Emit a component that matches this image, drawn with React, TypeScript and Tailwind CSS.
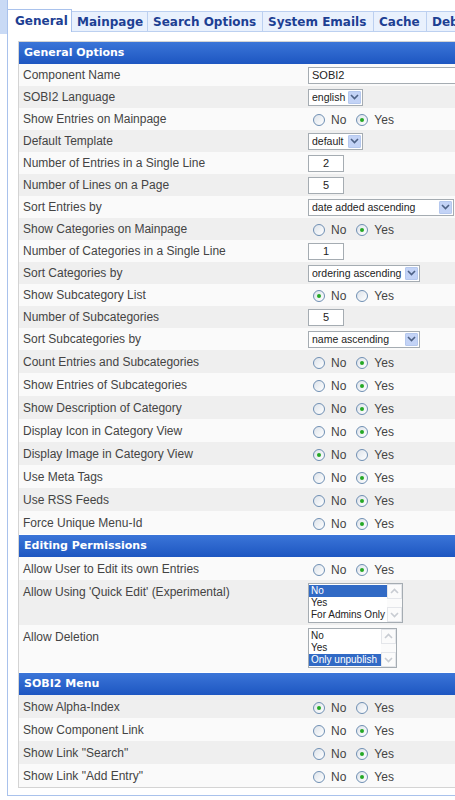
import React from 'react';

type Ctl =
  | { type: 'text'; value: string }
  | { type: 'select'; value: string; width: number }
  | { type: 'num'; value: string }
  | { type: 'radio'; yes: boolean }
  | { type: 'list'; items: string[]; selected: number; width: number };

interface Row {
  label: string;
  ctl: Ctl;
}

const general: Row[] = [
  { label: 'Component Name', ctl: { type: 'text', value: 'SOBI2' } },
  { label: 'SOBI2 Language', ctl: { type: 'select', value: 'english', width: 55 } },
  { label: 'Show Entries on Mainpage', ctl: { type: 'radio', yes: true } },
  { label: 'Default Template', ctl: { type: 'select', value: 'default', width: 55 } },
  { label: 'Number of Entries in a Single Line', ctl: { type: 'num', value: '2' } },
  { label: 'Number of Lines on a Page', ctl: { type: 'num', value: '5' } },
  { label: 'Sort Entries by', ctl: { type: 'select', value: 'date added ascending', width: 146 } },
  { label: 'Show Categories on Mainpage', ctl: { type: 'radio', yes: true } },
  { label: 'Number of Categories in a Single Line', ctl: { type: 'num', value: '1' } },
  { label: 'Sort Categories by', ctl: { type: 'select', value: 'ordering ascending', width: 112 } },
  { label: 'Show Subcategory List', ctl: { type: 'radio', yes: false } },
  { label: 'Number of Subcategories', ctl: { type: 'num', value: '5' } },
  { label: 'Sort Subcategories by', ctl: { type: 'select', value: 'name ascending', width: 112 } },
  { label: 'Count Entries and Subcategories', ctl: { type: 'radio', yes: true } },
  { label: 'Show Entries of Subcategories', ctl: { type: 'radio', yes: true } },
  { label: 'Show Description of Category', ctl: { type: 'radio', yes: true } },
  { label: 'Display Icon in Category View', ctl: { type: 'radio', yes: true } },
  { label: 'Display Image in Category View', ctl: { type: 'radio', yes: false } },
  { label: 'Use Meta Tags', ctl: { type: 'radio', yes: true } },
  { label: 'Use RSS Feeds', ctl: { type: 'radio', yes: true } },
  { label: 'Force Unique Menu-Id', ctl: { type: 'radio', yes: true } },
];

const editing: Row[] = [
  { label: 'Allow User to Edit its own Entries', ctl: { type: 'radio', yes: true } },
  {
    label: "Allow Using 'Quick Edit' (Experimental)",
    ctl: { type: 'list', items: ['No', 'Yes', 'For Admins Only'], selected: 0, width: 95 },
  },
  {
    label: 'Allow Deletion',
    ctl: { type: 'list', items: ['No', 'Yes', 'Only unpublish'], selected: 2, width: 89 },
  },
];

const menu: Row[] = [
  { label: 'Show Alpha-Index', ctl: { type: 'radio', yes: false } },
  { label: 'Show Component Link', ctl: { type: 'radio', yes: true } },
  { label: 'Show Link "Search"', ctl: { type: 'radio', yes: true } },
  { label: 'Show Link "Add Entry"', ctl: { type: 'radio', yes: true } },
];

// tab name and its width in the strip
const tabs: [string, number][] = [
  ['General', 64],
  ['Mainpage', 76],
  ['Search Options', 115],
  ['System Emails', 111],
  ['Cache', 53],
  ['Debug', 60],
];

function Radio({ on }: { on: boolean }) {
  return (
    <span className="relative block w-[12px] h-[12px] rounded-full border border-[#6f8fb3] bg-gradient-to-br from-[#dde3ea] to-white">
      {on && <span className="absolute left-[3px] top-[3px] w-[4px] h-[4px] rounded-full bg-[#25a825]" />}
    </span>
  );
}

function Arrow({ faded }: { faded?: boolean }) {
  return (
    <svg width="9" height="6" viewBox="0 0 9 6">
      <path d="M1 1 L4.5 4.5 L8 1" fill="none" stroke={faded ? '#c8ccd2' : '#4d6185'} strokeWidth="1.6" />
    </svg>
  );
}

function Control({ ctl }: { ctl: Ctl }) {
  if (ctl.type === 'text') {
    return (
      <div className="w-[170px] h-[17px] border border-[#a5acb2] bg-white pl-[3px] text-[11px] leading-[15px] text-[#222]">
        {ctl.value}
      </div>
    );
  }
  if (ctl.type === 'num') {
    return (
      <div className="w-[36px] h-[17px] border border-[#a5acb2] bg-white text-center text-[11px] leading-[15px] text-[#222]">
        {ctl.value}
      </div>
    );
  }
  if (ctl.type === 'select') {
    return (
      <div
        className="flex items-center h-[17px] border border-[#a5acb2] bg-white pl-[3px] pr-[1px] text-[10.5px] text-[#222]"
        style={{ width: ctl.width }}
      >
        <span className="flex-1 leading-[15px] whitespace-nowrap overflow-hidden">{ctl.value}</span>
        <span className="flex items-center justify-center w-[13px] h-[13px] bg-[#c3d3f6] border border-[#b5c8ee] rounded-[1px]">
          <Arrow />
        </span>
      </div>
    );
  }
  if (ctl.type === 'radio') {
    return (
      <div className="flex items-center pt-[2px] text-[12px] text-[#444]">
        <span className="ml-[5px]"><Radio on={!ctl.yes} /></span>
        <span className="ml-[6px]">No</span>
        <span className="ml-[10px]"><Radio on={ctl.yes} /></span>
        <span className="ml-[6px]">Yes</span>
      </div>
    );
  }
  return (
    <div className="flex h-[40px] border border-[#a5acb2] bg-white" style={{ width: ctl.width }}>
      <div className="flex-1 flex flex-col pt-[1px] text-[10px] leading-[12px] text-[#222]">
        {ctl.items.map((it, i) => (
          <div
            key={it}
            className={
              i === ctl.selected
                ? 'pl-[2px] bg-[#316ac5] text-white whitespace-nowrap'
                : 'pl-[2px] whitespace-nowrap'
            }
          >
            {it}
          </div>
        ))}
      </div>
      <div className="w-[15px] flex flex-col justify-between bg-[#fbfbfb]">
        <span className="flex items-center justify-center h-[15px] border border-[#e4e6ea] rotate-180">
          <Arrow faded />
        </span>
        <span className="flex items-center justify-center h-[15px] border border-[#e4e6ea]">
          <Arrow faded />
        </span>
      </div>
    </div>
  );
}

function Section({ title, rows, heights, grayFirst }: { title: string; rows: Row[]; heights: number[]; grayFirst?: boolean }) {
  return (
    <>
      <div className="h-[22px] flex items-center pl-[5px] bg-gradient-to-b from-[#3b75d8] to-[#1d56c1] text-white text-[11px] font-bold font-['DejaVu_Sans',sans-serif]">
        {title}
      </div>
      {rows.map((r, i) => {
        const gray = grayFirst ? i % 2 === 0 : i % 2 === 1;
        const tall = r.ctl.type === 'list';
        return (
          <div
            key={r.label}
            className={`flex ${tall ? 'items-start' : 'items-center'} ${gray ? 'bg-[#efefef]' : 'bg-[#fafafa]'}`}
            style={{ height: heights[i] }}
          >
            <div className={`w-[289px] shrink-0 pl-[4px] text-[12px] text-[#444] whitespace-nowrap ${tall ? 'pt-[3px]' : ''}`}>
              {r.label}
            </div>
            <div className={tall ? 'pt-[3px]' : ''}>
              <Control ctl={r.ctl} />
            </div>
          </div>
        );
      })}
    </>
  );
}

export default function App() {
  const genHeights = general.map((_, i) => (i < 13 ? 22 : 23));
  return (
    <div className="w-[455px] h-[800px] overflow-hidden bg-white font-['Liberation_Sans',Arial,sans-serif] flex">
      <div className="w-[7px] shrink-0 h-[34px] bg-[#c9daf5]" />
      <div className="w-[600px] shrink-0 h-[796px] border-l border-b border-[#a9c2ec] pt-[9px]">
        <div className="flex items-end h-[23px] font-['DejaVu_Sans',sans-serif] font-bold text-[12px] text-[#1d3f93]">
          {tabs.map(([t, w], i) =>
            i === 0 ? (
              <div
                key={t}
                className="h-[23px] shrink-0 flex items-center px-[7px] bg-white border-t border-r border-[#a9c2ec]"
                style={{ width: w }}
              >
                {t}
              </div>
            ) : (
              <div
                key={t}
                className="h-[21px] shrink-0 flex items-center px-[5px] bg-[#e9f1fd] border border-[#bcd0f0] border-l-0 whitespace-nowrap"
                style={{ width: w }}
              >
                {t}
              </div>
            )
          )}
          <div className="flex-1 h-[21px] border-b border-[#bcd0f0]" />
        </div>
        <div className="pl-[10px] pt-[9px]">
          <div className="w-[580px] border-t border-l border-b border-[#d4d4d4] bg-white">
            <Section title="General Options" rows={general} heights={genHeights} />
            <div className="h-[1px]" />
            <Section title="Editing Permissions" rows={editing} heights={[23, 45, 47]} />
            <div className="h-[1px]" />
            <Section title="SOBI2 Menu" rows={menu} heights={[23, 23, 23, 23]} grayFirst />
          </div>
        </div>
      </div>
    </div>
  );
}
